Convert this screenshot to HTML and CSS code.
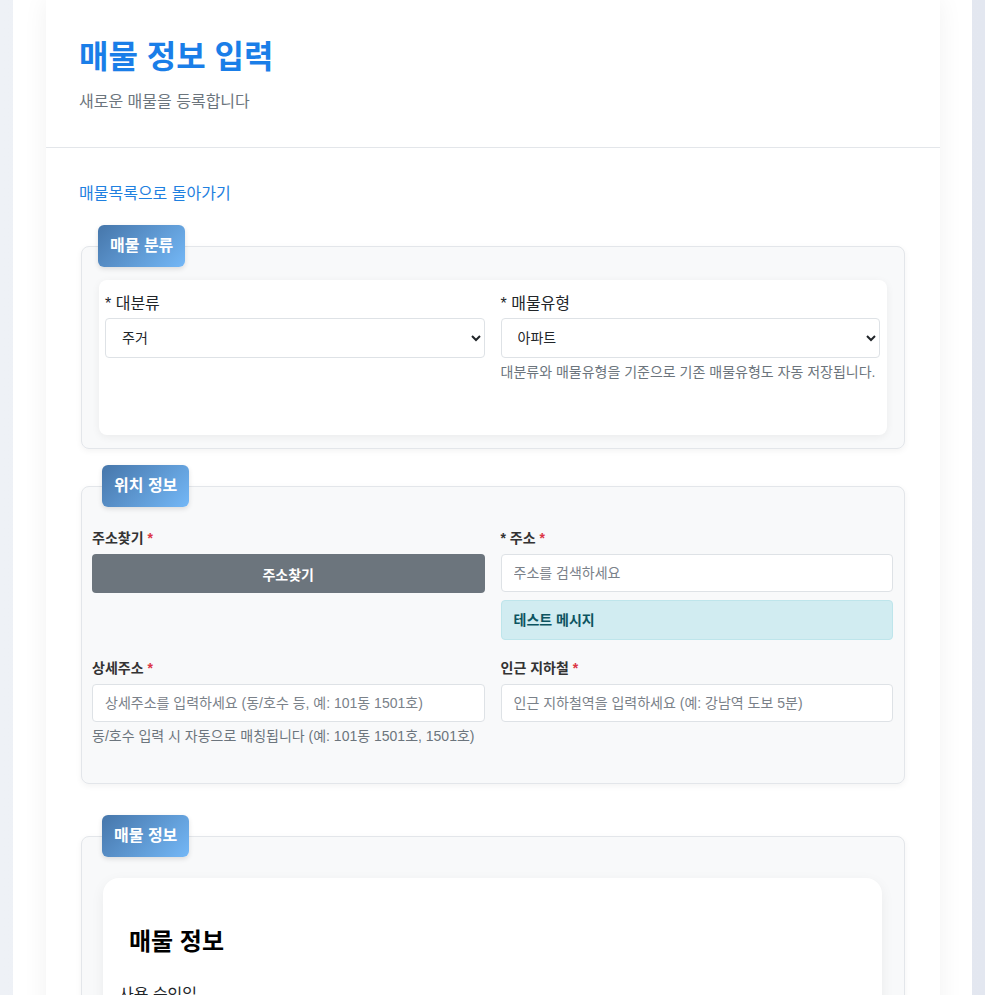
FILE: index.html
```html
<!DOCTYPE html>
<html lang="ko">
<head>
    <meta charset="UTF-8">
    <meta name="viewport" content="width=device-width, initial-scale=1.0">
    <title>매물 정보 입력</title>
    <link rel="stylesheet" href="styles.css">
</head>
<body>
    <div class="wrapper">
        <div class="card">
            <div class="card-header">
                <h1>매물 정보 입력</h1>
                <p>새로운 매물을 등록합니다</p>
            </div>
            <div class="card-body">
                <a href="#" class="back-link">매물목록으로 돌아가기</a>

                <fieldset class="section section-category">
                    <legend>매물 분류</legend>
                    <div class="panel">
                        <div class="form-group">
                            <label for="mainCategory">* 대분류</label>
                            <select id="mainCategory">
                                <option>주거</option>
                            </select>
                        </div>
                        <div class="form-group">
                            <label for="propertyType">* 매물유형</label>
                            <select id="propertyType">
                                <option>아파트</option>
                            </select>
                            <div class="help">대분류와 매물유형을 기준으로 기존 매물유형도 자동 저장됩니다.</div>
                        </div>
                    </div>
                </fieldset>

                <fieldset class="section section-location">
                    <legend>위치 정보</legend>
                    <div class="grid">
                        <div class="field">
                            <label class="field-label">주소찾기 <span class="req">*</span></label>
                            <button type="button" class="btn-search">주소찾기</button>
                        </div>
                        <div class="field">
                            <label class="field-label" for="address">* 주소 <span class="req">*</span></label>
                            <input type="text" id="address" placeholder="주소를 검색하세요">
                            <div class="alert-info">테스트 메시지</div>
                        </div>
                        <div class="field">
                            <label class="field-label" for="detailAddress">상세주소 <span class="req">*</span></label>
                            <input type="text" id="detailAddress" placeholder="상세주소를 입력하세요 (동/호수 등, 예: 101동 1501호)">
                            <div class="help">동/호수 입력 시 자동으로 매칭됩니다 (예: 101동 1501호, 1501호)</div>
                        </div>
                        <div class="field">
                            <label class="field-label" for="subway">인근 지하철 <span class="req">*</span></label>
                            <input type="text" id="subway" placeholder="인근 지하철역을 입력하세요 (예: 강남역 도보 5분)">
                        </div>
                    </div>
                </fieldset>

                <fieldset class="section section-info">
                    <legend>매물 정보</legend>
                    <div class="info-card">
                        <h2>매물 정보</h2>
                        <label class="plain-label">사용 승인일</label>
                    </div>
                </fieldset>
            </div>
        </div>
    </div>
</body>
</html>
```

FILE: styles.css
```css
body {
    font-family: "Liberation Sans", "Noto Sans CJK KR", sans-serif;
    background: linear-gradient(90deg, #eef1f6, #e3e7f0);
    margin: 0;
    padding: 0 13px;
    color: #212529;
}
.wrapper {
    background-color: #fff;
    padding: 0 32px 40px 33px;
    min-height: 995px;
}
.card {
    background-color: #fff;
    box-shadow: 0 0 24px rgba(0, 0, 0, 0.06);
}
.card-header {
    padding: 38px 33px 33px;
    border-bottom: 1px solid #e3e6ea;
}
.card-header h1 {
    color: #1a7ee8;
    font-size: 32px;
    line-height: 38px;
    font-weight: bold;
    margin: 0;
}
.card-header p {
    color: #6c757d;
    font-size: 16px;
    line-height: 24px;
    margin: 14px 0 0;
}
.card-body {
    padding: 35px 33px 0;
}
.back-link {
    display: block;
    color: #1f80e0;
    font-size: 16px;
    line-height: 22px;
    text-decoration: none;
    margin-bottom: 20px;
}
.section {
    background-color: #f8f9fa;
    border: 1px solid #e3e6ea;
    border-radius: 8px;
    box-shadow: 0 2px 6px rgba(0, 0, 0, 0.05);
    margin: 0 2px;
}
.section legend {
    background: linear-gradient(135deg, #4676aa, #74b8f7);
    color: #fff;
    font-size: 16px;
    font-weight: bold;
    line-height: 24px;
    padding: 9px 12px;
    border-radius: 6px;
    box-shadow: 0 2px 5px rgba(0, 0, 0, 0.12);
}
.section-category {
    padding: 13px 17px 13px 16px;
}
.section-location {
    margin-top: 16px;
    padding: 21px 11px 36px 10px;
}
.section-location legend {
    margin-left: 10px;
}
.section-info {
    margin-top: 31px;
    padding: 21px 22px 20px 20px;
}
.panel {
    background-color: #fff;
    border-radius: 8px;
    box-shadow: 0 2px 8px rgba(0, 0, 0, 0.06);
    margin-left: 1px;
    padding: 12px 7px 52px 6px;
    display: grid;
    grid-template-columns: 1fr 1fr;
    gap: 16px;
}
.form-group label {
    display: block;
    font-size: 16px;
    line-height: 24px;
    margin-bottom: 2px;
}
.form-group select {
    display: block;
    width: 100%;
    height: 40px;
    padding: 0 12px;
    font-family: inherit;
    font-size: 14px;
    color: #212529;
    background-color: #fff;
    border: 1px solid #dee2e6;
    border-radius: 4px;
}
.help {
    color: #6c757d;
    font-size: 14px;
    line-height: 21px;
    margin-top: 4px;
}
.grid {
    display: grid;
    grid-template-columns: 1fr 1fr;
    column-gap: 16px;
    row-gap: 18px;
}
.field-label {
    display: block;
    font-size: 14px;
    font-weight: bold;
    line-height: 21px;
    color: #333;
    margin-bottom: 5px;
}
.req {
    color: #dc3545;
}
.btn-search {
    display: block;
    width: 100%;
    height: 39px;
    background-color: #6c757d;
    color: #fff;
    border: none;
    border-radius: 4px;
    font-family: inherit;
    font-size: 14px;
    font-weight: bold;
}
.field input {
    display: block;
    width: 100%;
    box-sizing: border-box;
    height: 38px;
    padding: 0 12px;
    font-family: inherit;
    font-size: 14px;
    border: 1px solid #dee2e6;
    border-radius: 4px;
    background-color: #fff;
}
.field input::placeholder {
    color: #7a8189;
}
.alert-info {
    margin-top: 8px;
    padding: 9px 12px;
    line-height: 20px;
    font-size: 14px;
    font-weight: bold;
    color: #0c5460;
    background-color: #d1ecf1;
    border: 1px solid #bee5eb;
    border-radius: 4px;
}
.info-card {
    background-color: #fff;
    border-radius: 16px;
    box-shadow: 0 4px 14px rgba(0, 0, 0, 0.06);
    margin-left: 1px;
    padding: 49px 16px 40px;
}
.info-card h2 {
    font-size: 24px;
    line-height: 30px;
    margin: 0 10px 26px;
    color: #000;
}
.plain-label {
    display: block;
    font-size: 16px;
    line-height: 24px;
}
```
